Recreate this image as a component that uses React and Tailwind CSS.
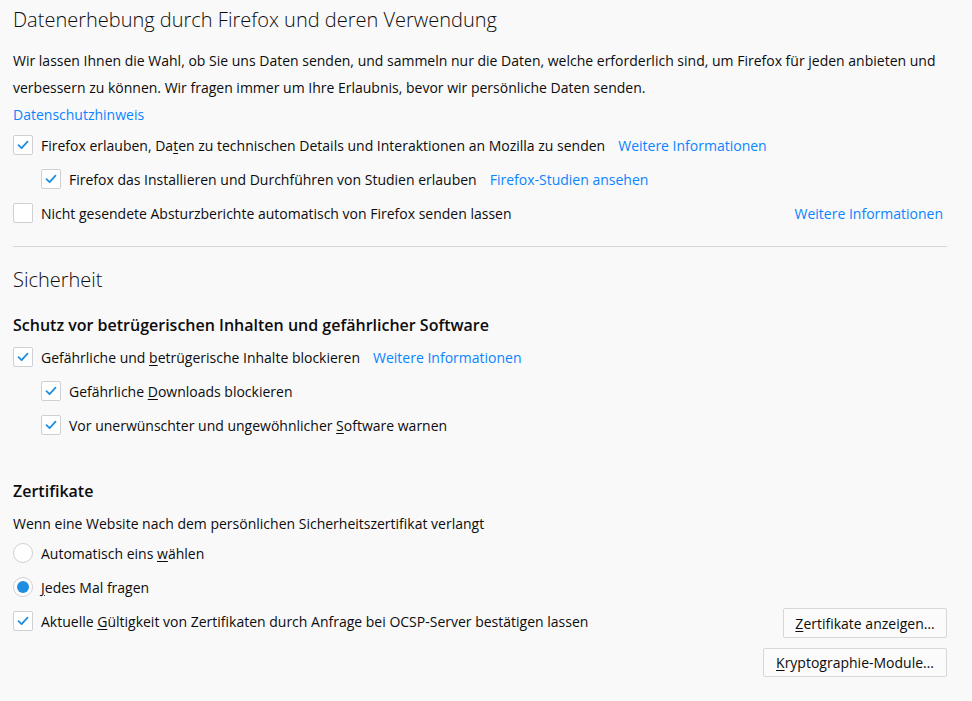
import React from "react";

const font = { fontFamily: '"Open Sans", "Noto Sans", sans-serif' };

const Check = ({ checked }) => (
  <span className="w-[20px] h-[20px] shrink-0 rounded-[2px] border border-[#d0d0d4] bg-white flex items-center justify-center">
    {checked && (
      <svg width="12" height="10" viewBox="0 0 12 10" fill="none">
        <path d="M1.5 5.2 L4.6 8.2 L10.5 1.6" stroke="#1e8fe0" strokeWidth="1.8" strokeLinecap="round" strokeLinejoin="round" />
      </svg>
    )}
  </span>
);

const Radio = ({ checked }) => (
  <span className="w-[20px] h-[20px] shrink-0 rounded-full border border-[#d0d0d4] bg-white flex items-center justify-center">
    {checked && <span className="w-[12px] h-[12px] rounded-full bg-[#1e8fe0]" />}
  </span>
);

const U = ({ children }) => <span className="underline underline-offset-2">{children}</span>;

const Link = ({ children, className = "" }) => (
  <a className={`text-[#0a84ff] cursor-pointer ${className}`}>{children}</a>
);

const Row = ({ indent, checked, radio, children, right }) => (
  <div className={`h-[34px] flex items-center gap-[8px] ${indent ? "pl-[28px]" : ""}`}>
    {radio ? <Radio checked={checked} /> : <Check checked={checked} />}
    <span className="flex-1 flex items-center gap-[13px] whitespace-nowrap">{children}</span>
    {right}
  </div>
);

export default function App() {
  return (
    <div className="min-h-[701px] bg-[#f9f9fa] text-[#0c0c0d] text-[14px] pl-[13px] pr-[25px] pt-[5px] overflow-hidden" style={font}>
      <h1 className="text-[20px] font-light leading-[30px] h-[30px]">
        Datenerhebung durch Firefox und deren Verwendung
      </h1>
      <p className="mt-[12px] leading-[27px]">
        Wir lassen Ihnen die Wahl, ob Sie uns Daten senden, und sammeln nur die Daten, welche erforderlich sind, um Firefox für jeden anbieten und verbessern zu können. Wir fragen immer um Ihre Erlaubnis, bevor wir persönliche Daten senden.
      </p>
      <div className="leading-[27px] h-[27px]">
        <Link>Datenschutzhinweis</Link>
      </div>
      <Row checked>
        <span>
          Firefox erlauben, Da<U>t</U>en zu technischen Details und Interaktionen an Mozilla zu senden
        </span>
        <Link>Weitere Informationen</Link>
      </Row>
      <Row indent checked>
        <span>Firefox das Installieren und Durchführen von Studien erlauben</span>
        <Link>Firefox-Studien ansehen</Link>
      </Row>
      <Row right={<Link className="mr-[4px]">Weitere Informationen</Link>}>
        <span>
          Nicht <U>g</U>esendete Absturzberichte automatisch von Firefox senden lassen
        </span>
      </Row>

      <div className="mt-[16px] border-t border-[#d7d7db]" />

      <h1 className="mt-[18px] text-[20px] font-light leading-[30px] h-[30px]">Sicherheit</h1>
      <h2 className="mt-[18px] text-[16px] font-semibold leading-[24px]">
        Schutz vor betrügerischen Inhalten und gefährlicher Software
      </h2>
      <div className="mt-[3px]">
        <Row checked>
          <span>
            Gefährliche und <U>b</U>etrügerische Inhalte blockieren
          </span>
          <Link>Weitere Informationen</Link>
        </Row>
        <Row indent checked>
          <span>
            Gefährliche <U>D</U>ownloads blockieren
          </span>
        </Row>
        <Row indent checked>
          <span>
            Vor unerwünschter und ungewöhnlicher <U>S</U>oftware warnen
          </span>
        </Row>
      </div>

      <h2 className="mt-[37px] text-[16px] font-semibold leading-[24px]">Zertifikate</h2>
      <p className="mt-[9px] leading-[24px]">
        Wenn eine Website nach dem persönlichen Sicherheitszertifikat verlangt
      </p>
      <div>
        <Row radio>
          <span>
            Automatisch eins <U>w</U>ählen
          </span>
        </Row>
        <Row radio checked>
          <span>
            <U>J</U>edes Mal fragen
          </span>
        </Row>
        <Row
          checked
          right={
            <button className="self-end h-[30px] w-[164px] border border-[#d7d7db] rounded-[2px] bg-[#fbfbfb] text-[14px]">
              <U>Z</U>ertifikate anzeigen…
            </button>
          }
        >
          <span>
            Aktuelle <U>G</U>ültigkeit von Zertifikaten durch Anfrage bei OCSP-Server bestätigen lassen
          </span>
        </Row>
        <div className="flex justify-end mt-[10px]">
          <button className="h-[29px] w-[184px] border border-[#d7d7db] rounded-[2px] bg-[#fbfbfb] text-[14px]">
            <U>K</U>ryptographie-Module…
          </button>
        </div>
      </div>
    </div>
  );
}
